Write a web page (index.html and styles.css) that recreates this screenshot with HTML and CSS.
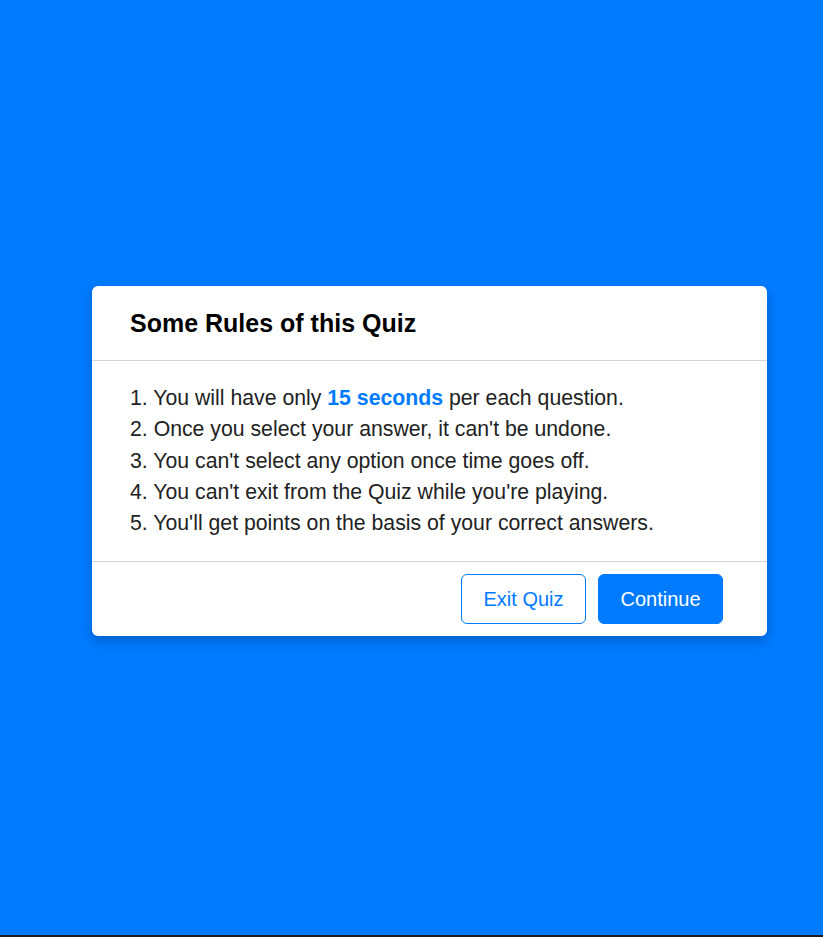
FILE: index.html
```html
<!DOCTYPE html>
<html lang="en">
<head>
<meta charset="utf-8">
<title>Quiz Rules</title>
<link rel="stylesheet" href="styles.css">
</head>
<body>
<div class="stage">
  <div class="info-box">
    <div class="info-title"><span>Some Rules of this Quiz</span></div>
    <div class="info-list">
      <div class="info">1. You will have only <span class="hl">15 seconds</span> per each question.</div>
      <div class="info">2. Once you select your answer, it can't be undone.</div>
      <div class="info">3. You can't select any option once time goes off.</div>
      <div class="info">4. You can't exit from the Quiz while you're playing.</div>
      <div class="info">5. You'll get points on the basis of your correct answers.</div>
    </div>
    <div class="buttons">
      <button class="btn quit">Exit Quiz</button>
      <button class="btn restart">Continue</button>
    </div>
  </div>
</div>
</body>
</html>
```
FILE: styles.css
```css
* { box-sizing: border-box; }
html, body { margin: 0; padding: 0; }
body {
  background: #1e1e1e;
  font-family: "Liberation Sans", Arial, sans-serif;
  height: 937px;
  overflow: hidden;
}
.stage {
  height: 935px;
  background: #007bff;
  padding: 286px 0 0 92px;
}
.info-box {
  width: 675px;
  background: #fff;
  border-radius: 6px;
  box-shadow: 0 5px 12px rgba(0, 0, 0, 0.22);
}
.info-title {
  height: 75px;
  padding: 0 38px;
  border-bottom: 1px solid #d3d3d3;
  display: flex;
  align-items: center;
  font-size: 25px;
  font-weight: 700;
  color: #000;
}
.info-list {
  padding: 18.75px 38px;
  color: #222;
}
.info {
  margin: 6.25px 0;
  font-size: 21.25px;
  line-height: 25px;
}
.hl {
  color: #007bff;
  font-weight: 700;
}
.buttons {
  height: 75px;
  border-top: 1px solid #d3d3d3;
  padding: 0 44px 0 38px;
  display: flex;
  align-items: center;
  justify-content: flex-end;
  gap: 12px;
}
.btn {
  width: 125px;
  height: 50px;
  border-radius: 6px;
  border: 1px solid #007bff;
  font-family: "Liberation Sans", Arial, sans-serif;
  font-size: 20px;
  cursor: pointer;
}
.quit { background: #fff; color: #007bff; }
.restart { background: #007bff; color: #fff; }
```
